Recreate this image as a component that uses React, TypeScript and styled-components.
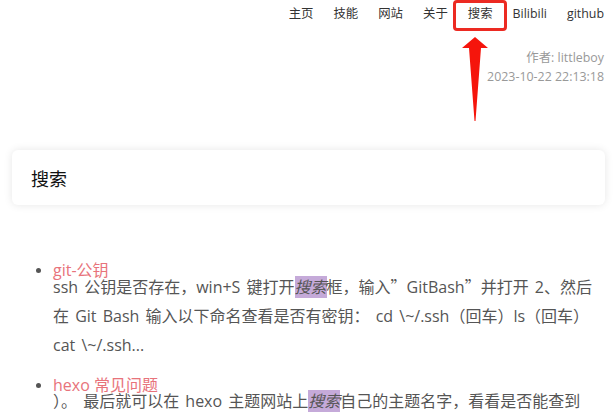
import React from "react";
import styled, { createGlobalStyle } from "styled-components";

const GlobalStyle = createGlobalStyle`
  html, body {
    margin: 0;
    padding: 0;
    background: #ffffff;
    overflow: hidden;
  }
  body {
    font-family: "Open Sans", "Noto Sans CJK SC", sans-serif;
    color: #333;
  }
`;

const Page = styled.div`
  position: relative;
  width: 614px;
  height: 412px;
  overflow: hidden;
`;

const Nav = styled.nav`
  display: flex;
  justify-content: flex-end;
  height: 28px;
`;

const NavItem = styled.a`
  padding: 0 10px;
  line-height: 28px;
  font-size: 12.4px;
  color: #333;
  text-decoration: none;
  white-space: nowrap;
`;

const Meta = styled.div`
  margin-top: 20px;
  padding-right: 10px;
  text-align: right;
  font-size: 12.4px;
  line-height: 19px;
  color: #999;
`;

const Card = styled.section`
  margin: 64px 9px 0 12px;
  padding: 17px 19px 13px;
  background: #fff;
  border-radius: 6px;
  box-shadow: 0 0 8px rgba(0, 0, 0, 0.1);
`;

const CardTitle = styled.h1`
  margin: 0;
  font-size: 18px;
  line-height: 25px;
  font-weight: 400;
  color: #111;
`;

const List = styled.ul`
  margin: 55px 0 0;
  padding-left: 53px;
  list-style: disc;
  color: #555;
`;

const Item = styled.li`
  margin-bottom: 15px;
  &::marker {
    font-size: 14px;
    color: #555;
  }
`;

const ItemTitle = styled.a`
  display: block;
  font-size: 16px;
  line-height: 20px;
  color: #e8737b;
  text-decoration: none;
`;

const Excerpt = styled.div`
  margin-top: -8px;
  font-size: 16px;
  line-height: 29px;
  word-spacing: 2px;
  color: #555;
`;

const Line = styled.div`
  white-space: nowrap;
`;

const Cjk = styled.span`
  font-family: "Noto Sans CJK SC", sans-serif;
`;

const Mark = styled.em`
  font-style: italic;
  background: #c5aad9;
  color: #555;
`;

const RedBox = styled.div`
  position: absolute;
  left: 453px;
  top: 0;
  width: 48px;
  height: 25px;
  border: 3px solid #ec2a22;
  border-radius: 4px;
  pointer-events: none;
`;

const ArrowSvg = styled.svg`
  position: absolute;
  left: 462px;
  top: 37px;
`;

export default function App() {
  return (
    <Page>
      <GlobalStyle />
      <Nav>
        <NavItem>主页</NavItem>
        <NavItem>技能</NavItem>
        <NavItem>网站</NavItem>
        <NavItem>关于</NavItem>
        <NavItem>搜索</NavItem>
        <NavItem>Bilibili</NavItem>
        <NavItem>github</NavItem>
      </Nav>
      <Meta>
        <div>作者: littleboy</div>
        <div>2023-10-22 22:13:18</div>
      </Meta>
      <Card>
        <CardTitle>搜索</CardTitle>
      </Card>
      <List>
        <Item>
          <ItemTitle>git-公钥</ItemTitle>
          <Excerpt>
            <Line>
              ssh 公钥是否存在，win+S 键打开<Mark>搜索</Mark>框，输入<Cjk>”</Cjk>GitBash<Cjk>”</Cjk>并打开 2、然后
            </Line>
            <Line>在 Git Bash 输入以下命名查看是否有密钥： cd \~/.ssh（回车）ls（回车）</Line>
            <Line>cat \~/.ssh...</Line>
          </Excerpt>
        </Item>
        <Item>
          <ItemTitle>hexo 常见问题</ItemTitle>
          <Excerpt>
            <Line>
              ）。 最后就可以在 hexo 主题网站上<Mark>搜索</Mark>自己的主题名字，看看是否能查到
            </Line>
          </Excerpt>
        </Item>
      </List>
      <RedBox />
      <ArrowSvg width="26" height="84" viewBox="0 0 26 84">
        <polygon points="13,0 26,11 19,11 13.5,84 12.5,84 7,11 0,11" fill="#f5150c" />
      </ArrowSvg>
    </Page>
  );
}
